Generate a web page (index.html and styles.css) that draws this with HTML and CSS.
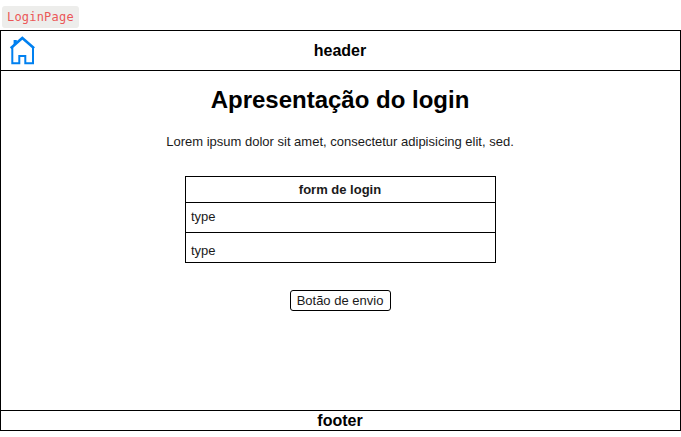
FILE: index.html
```html
<!DOCTYPE html>
<html lang="pt"><head><meta charset="utf-8"><title>LoginPage</title><link rel="stylesheet" href="styles.css"></head>
<body>
<div class="tag-row"><code class="tag">LoginPage</code></div>
<div class="page">
<header class="header">
<svg class="home" width="27" height="29" viewBox="0 0 27 29" fill="none" stroke="#0080f0" stroke-width="2"><path d="M1.7 12.2 13.3 2 25.1 12.2" stroke-width="2.6"/><path d="M3.3 11V27.3h7V20h6v7.3h7.7V11"/><path d="M4.6 4h3.2v3L4.6 9.8z" fill="#0080f0" stroke="none"/></svg>
<span class="header-title">header</span></header>
<main class="main">
<h1 class="title">Apresentação do login</h1>
<p class="text">Lorem ipsum dolor sit amet, consectetur adipisicing elit, sed.</p>
<div class="form"><div class="form-title">form de login</div><div class="field">type</div><div class="field field-last">type</div></div>
<button class="send">Botão de envio</button>
</main>
<footer class="footer">footer</footer>
</div>
</body></html>
```
FILE: styles.css
```css
* { box-sizing: border-box; }
body { margin: 0; background: #fff; color: #000; font-family: "Liberation Sans", Arial, sans-serif; overflow: hidden; }
.tag-row { height: 30px; padding: 6px 0 0 2px; }
.tag { display: block; width: 77px; height: 22px; border-radius: 3px; background: #ededeb; color: #eb5757; font: 12px/23px "DejaVu Sans Mono", monospace; padding-left: 5px; white-space: nowrap; letter-spacing: 0.2px; }
.page { width: 681px; height: 401px; border: 1px solid #000; display: flex; flex-direction: column; }
.header { height: 40px; border-bottom: 1px solid #000; display: grid; grid-template-columns: 40px 1fr 40px; align-items: center; }
.home { margin-left: 8px; }
.header-title { padding-right: 1px; text-align: center; font-size: 16px; font-weight: bold; }
.main { flex: 1; display: flex; flex-direction: column; align-items: center; }
.title { margin: 15px 0 0; padding-right: 1px; font-size: 24px; line-height: 28px; }
.text { margin: 20px 0 0; padding-right: 1px; font-size: 13px; line-height: 16px; color: #1a1a1a; }
.form { width: 311px; height: 87px; margin-top: 26px; border: 1px solid #000; font-size: 13px; color: #1a1a1a; }
.form-title { height: 26px; padding-right: 1px; border-bottom: 1px solid #000; text-align: center; font-weight: bold; line-height: 26px; }
.field { height: 30px; padding-left: 5px; border-bottom: 1px solid #000; line-height: 28px; }
.field-last { height: 29px; border: 0; line-height: 36px; }
.send { width: 101px; height: 21px; margin-top: 27px; padding: 0 1px 0 0; border: 1px solid #000; border-radius: 3px; background: #fff; color: #1a1a1a; font: 13px/18px "Liberation Sans", Arial, sans-serif; }
.footer { height: 20px; padding-right: 1px; border-top: 1px solid #000; text-align: center; font-size: 16px; font-weight: bold; line-height: 19px; }
```
